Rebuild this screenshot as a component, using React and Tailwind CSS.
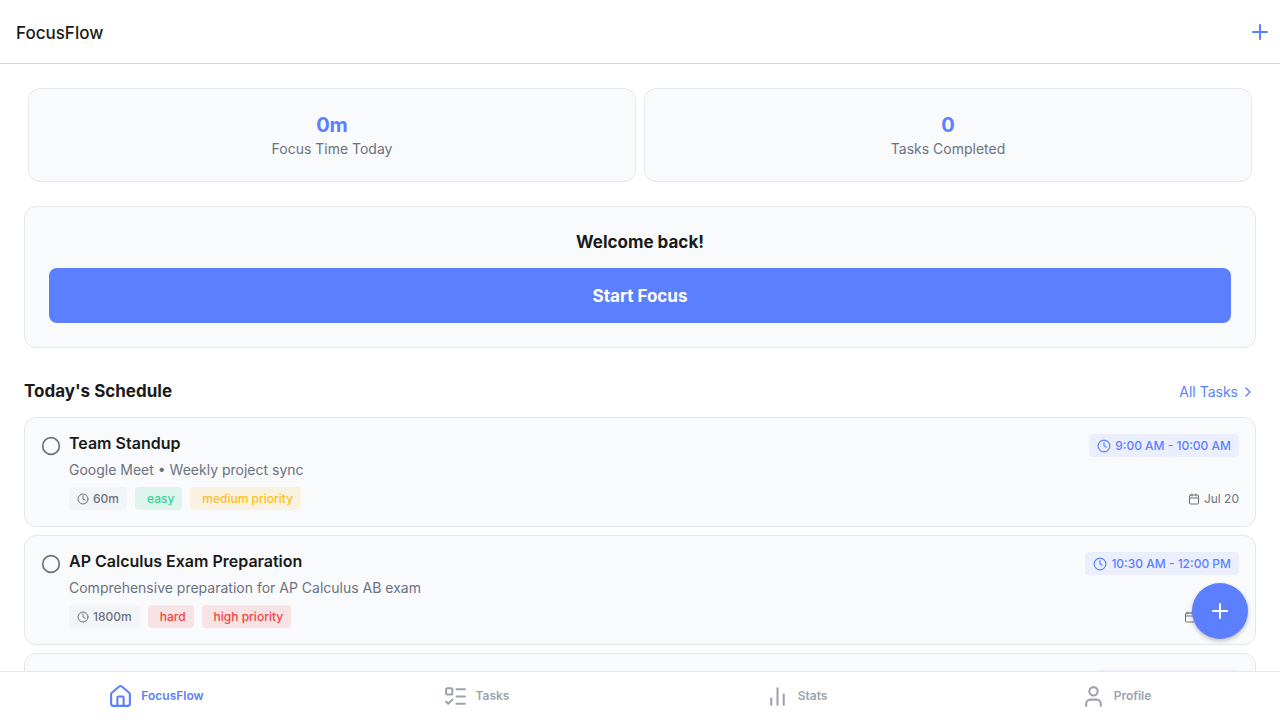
import React from "react";
import {
  Plus,
  Circle,
  Clock,
  Calendar,
  ChevronRight,
  House,
  User,
  ListTodo,
} from "lucide-react";

const stats = [
  { value: "0m", label: "Focus Time Today" },
  { value: "0", label: "Tasks Completed" },
];

const tones = {
  green: "bg-[#def5ee] text-[#34d399]",
  amber: "bg-[#f9f2e0] text-[#fbbf24]",
  red: "bg-[#f8e3e4] text-[#ef4444]",
};

const tasks = [
  {
    title: "Team Standup",
    note: "Google Meet • Weekly project sync",
    time: "9:00 AM - 10:00 AM",
    length: "60m",
    tags: [
      { text: "easy", tone: "green" },
      { text: "medium priority", tone: "amber" },
    ],
    date: "Jul 20",
  },
  {
    title: "AP Calculus Exam Preparation",
    note: "Comprehensive preparation for AP Calculus AB exam",
    time: "10:30 AM - 12:00 PM",
    length: "1800m",
    tags: [
      { text: "hard", tone: "red" },
      { text: "high priority", tone: "red" },
    ],
    date: "Aug 10",
  },
  {
    title: "Project Review",
    note: "Review of open project items",
    time: "2:00 PM - 3:00 PM",
    length: "60m",
    tags: [{ text: "easy", tone: "green" }],
    date: "Jul 20",
  },
];

function BarsIcon({ size }) {
  return (
    <svg
      width={size}
      height={size}
      viewBox="0 0 24 24"
      fill="none"
      stroke="currentColor"
      strokeWidth="2"
      strokeLinecap="round"
      strokeLinejoin="round"
      aria-hidden="true"
    >
      <path d="M18 20V10" />
      <path d="M12 20V4" />
      <path d="M6 20v-6" />
    </svg>
  );
}

const tabs = [
  { label: "FocusFlow", Icon: House, active: true },
  { label: "Tasks", Icon: ListTodo },
  { label: "Stats", Icon: BarsIcon },
  { label: "Profile", Icon: User },
];

function TaskCard({ task }) {
  return (
    <li className="flex items-start gap-2 rounded-xl border border-[#e5e7eb] bg-[#f9fafc] p-4">
      <label className="relative mt-0.5 shrink-0 cursor-pointer text-[#6b7280]">
        <input type="checkbox" aria-label={"Complete " + task.title} className="peer sr-only" />
        <Circle size={20} className="peer-checked:fill-current" />
      </label>
      <div className="min-w-0 flex-1">
        <div className="flex items-start justify-between gap-2">
          <h3 className="text-base leading-[19px] font-semibold">{task.title}</h3>
          <div className="flex shrink-0 items-center gap-1 rounded bg-[#ebeffd] px-2 py-1 text-xs leading-[15px] font-medium text-[#5b7fff]">
            <Clock size={14} />
            <span>{task.time}</span>
          </div>
        </div>
        <p className="mt-1 text-sm leading-[18px] text-[#6b7280]">{task.note}</p>
        <div className="mt-2 flex items-center justify-between text-xs leading-[15px] text-[#6b7280]">
          <div className="flex gap-2 font-medium">
            <span className="flex items-center gap-1 rounded bg-[#f3f4f8] px-2 py-1">
              <Clock size={12} />
              {task.length}
            </span>
            {task.tags.map((tag) => (
              <span key={tag.text} className={"rounded py-1 pr-2 pl-3 " + tones[tag.tone]}>
                {tag.text}
              </span>
            ))}
          </div>
          <div className="flex items-center gap-1">
            <Calendar size={12} />
            <span>{task.date}</span>
          </div>
        </div>
      </div>
    </li>
  );
}

export default function App() {
  return (
    <div className="relative flex h-screen flex-col bg-white font-[Inter,sans-serif] text-[#1a1a1a]">
      <header className="flex h-16 shrink-0 items-center justify-between border-b border-[#d8d8d8] pr-2 pl-4">
        <h1 className="pt-1 text-[17px] leading-[21px] font-medium">FocusFlow</h1>
        <button type="button" aria-label="Add task" className="text-[#5b7fff]">
          <Plus size={24} />
        </button>
      </header>

      <main className="min-h-0 flex-1 overflow-y-auto p-6 [scrollbar-width:none]">
        <section className="grid grid-cols-2 gap-2 px-1">
          {stats.map((stat) => (
            <div
              key={stat.label}
              className="rounded-xl border border-[#e5e7eb] bg-[#f9fafc] p-6 text-center"
            >
              <p className="text-xl leading-6 font-bold text-[#5b7fff]">{stat.value}</p>
              <p className="mt-1 text-sm leading-4 text-[#6b7280]">{stat.label}</p>
            </div>
          ))}
        </section>

        <section className="mt-6 rounded-xl border border-[#e5e7eb] bg-[#f9fafc] p-6 text-center">
          <h2 className="text-[17px] leading-[23px] font-bold">Welcome back!</h2>
          <button
            type="button"
            className="mt-3.5 w-full rounded-lg bg-[#5b7fff] pt-[17px] pb-[15px] text-[17px] leading-[23px] font-bold text-white"
          >
            Start Focus
          </button>
        </section>

        <section className="mt-8">
          <div className="flex items-end justify-between">
            <h2 className="text-[17px] leading-[23px] font-bold">Today's Schedule</h2>
            <a href="#tasks" className="flex items-center gap-0.5 text-sm leading-[23px] text-[#5b7fff]">
              All Tasks
              <ChevronRight size={16} />
            </a>
          </div>
          <ul className="mt-3.5 flex flex-col gap-2">
            {tasks.map((task) => (
              <TaskCard key={task.title} task={task} />
            ))}
          </ul>
        </section>
      </main>

      <button
        type="button"
        aria-label="New task"
        className="absolute right-8 bottom-[81px] flex size-14 items-center justify-center rounded-full bg-[#5b7fff] text-white shadow-[0_2px_4px_rgba(0,0,0,0.25)]"
      >
        <Plus size={24} />
      </button>

      <nav className="grid h-[49px] shrink-0 grid-cols-4 border-t border-[#e5e7eb] bg-white">
        {tabs.map(({ label, Icon, active }) => (
          <a
            key={label}
            href={"#" + label.toLowerCase()}
            className={
              "flex items-center justify-center gap-2 pr-2 text-xs font-semibold " +
              (active ? "text-[#5b7fff]" : "text-[#9ca3af]")
            }
          >
            <Icon size={25} />
            <span>{label}</span>
          </a>
        ))}
      </nav>
    </div>
  );
}
